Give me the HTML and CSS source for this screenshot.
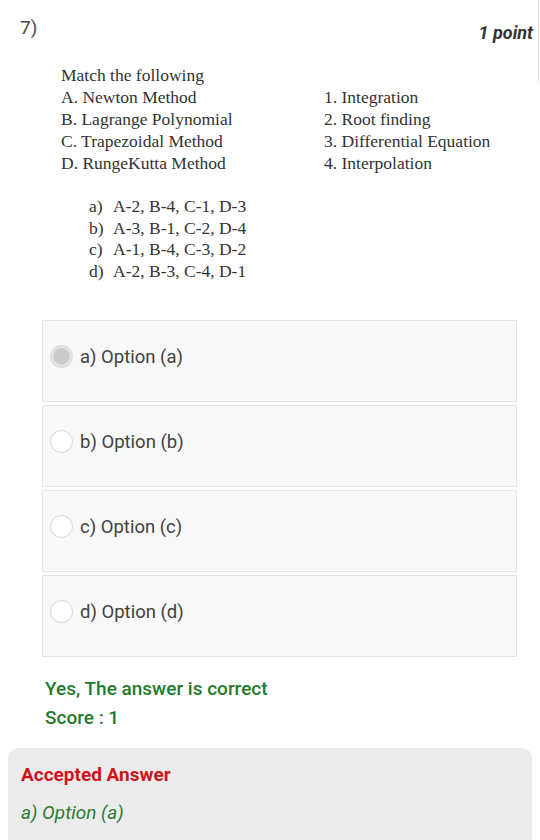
FILE: index.html
```html
<!DOCTYPE html>
<html>
<head>
<meta charset="utf-8">
<link rel="stylesheet" href="styles.css">
</head>
<body>
<div class="page">
  <div class="head">
    <span class="qnum">7)</span>
    <span class="points">1 point</span>
  </div>
  <div class="question">
    <div class="q-title">Match the following</div>
    <div class="match">
      <div class="col-left">
        <div>A. Newton Method</div>
        <div>B. Lagrange Polynomial</div>
        <div>C. Trapezoidal Method</div>
        <div>D. RungeKutta Method</div>
      </div>
      <div class="col-right">
        <div>1. Integration</div>
        <div>2. Root finding</div>
        <div>3. Differential Equation</div>
        <div>4. Interpolation</div>
      </div>
    </div>
    <div class="choices">
      <div class="choice"><span class="cl">a)</span><span>A-2, B-4, C-1, D-3</span></div>
      <div class="choice"><span class="cl">b)</span><span>A-3, B-1, C-2, D-4</span></div>
      <div class="choice"><span class="cl">c)</span><span>A-1, B-4, C-3, D-2</span></div>
      <div class="choice"><span class="cl">d)</span><span>A-2, B-3, C-4, D-1</span></div>
    </div>
  </div>
  <div class="options">
    <div class="option"><span class="radio checked"></span><span class="opt-text">a) Option (a)</span></div>
    <div class="option"><span class="radio"></span><span class="opt-text">b) Option (b)</span></div>
    <div class="option"><span class="radio"></span><span class="opt-text">c) Option (c)</span></div>
    <div class="option"><span class="radio"></span><span class="opt-text">d) Option (d)</span></div>
  </div>
  <div class="result">
    <div>Yes, The answer is correct</div>
    <div>Score : 1</div>
  </div>
  <div class="accepted">
    <div class="acc-title">Accepted Answer</div>
    <div class="acc-answer">a) Option (a)</div>
  </div>
  <div class="edge"></div>
</div>
</body>
</html>
```

FILE: styles.css
```css
html, body {
  margin: 0;
  padding: 0;
  background: #ffffff;
}
.page {
  width: 540px;
  height: 840px;
  overflow: hidden;
  font-family: Roboto, "Noto Sans", sans-serif;
  color: #444444;
  position: relative;
}
.edge {
  position: absolute;
  top: 0;
  right: 1px;
  width: 1px;
  height: 82px;
  background: #e4e4e4;
}
.head {
  display: flex;
  justify-content: space-between;
  align-items: flex-start;
  padding: 16px 7px 0 20px;
  height: 48px;
  box-sizing: border-box;
}
.qnum {
  font-size: 19px;
  line-height: 24px;
  color: #4a4a4a;
}
.points {
  font-size: 18px;
  font-weight: 700;
  font-style: italic;
  color: #333333;
  line-height: 24px;
  margin-top: 5px;
}
.question {
  font-family: "Liberation Serif", "Times New Roman", serif;
  font-size: 17.5px;
  line-height: 22px;
  color: #333333;
  padding-left: 61px;
  margin-top: 16px;
}
.match {
  display: flex;
}
.col-left {
  width: 263px;
}
.choices {
  margin-top: 22px;
  padding-left: 28px;
  line-height: 21.7px;
}
.choice {
  display: flex;
}
.cl {
  width: 24px;
}
.options {
  margin: 37px 23px 0 42px;
  display: flex;
  flex-direction: column;
  gap: 3px;
}
.option {
  height: 82px;
  box-sizing: border-box;
  background: #f9f9f9;
  border: 1px solid #e5e5e5;
  display: flex;
  align-items: center;
  padding-left: 7px;
  padding-bottom: 8px;
}
.radio {
  width: 23px;
  height: 23px;
  border-radius: 50%;
  border: 1px solid #d6d6d6;
  background: #ffffff;
  box-sizing: border-box;
  margin-right: 7px;
}
.radio.checked {
  border: 2px solid #e0e0e0;
  background: #cbcbcb;
  box-shadow: inset 0 0 0 1px #f0f0f0;
}
.opt-text {
  font-size: 18.5px;
  color: #424242;
}
.result {
  margin: 17px 0 0 45px;
  color: #1f7a2c;
  font-size: 19px;
  font-weight: 500;
  line-height: 29px;
}
.accepted {
  margin: 16px 8px 0 8px;
  background: #ececec;
  border-radius: 10px;
  padding: 14px 13px 16px 13px;
  height: 110px;
  box-sizing: border-box;
}
.acc-title {
  color: #d0121b;
  font-size: 19px;
  font-weight: 700;
  line-height: 26px;
}
.acc-answer {
  color: #2b7a33;
  font-size: 19px;
  font-style: italic;
  line-height: 26px;
  margin-top: 12px;
}
```
